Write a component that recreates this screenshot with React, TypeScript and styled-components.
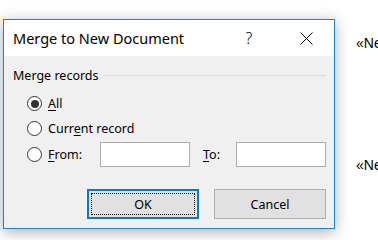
import React from "react";
import styled, { createGlobalStyle } from "styled-components";

const Global = createGlobalStyle`
  html, body { margin: 0; padding: 0; background: #ffffff; }
  body { width: 378px; height: 240px; overflow: hidden; font-family: "Noto Sans", "Open Sans", sans-serif; }
`;

const Page = styled.div`
  display: flex;
  align-items: flex-start;
  padding: 19px 0 0 3px;
  width: 378px;
  height: 240px;
  box-sizing: border-box;
  overflow: hidden;
`;

const Dialog = styled.div`
  flex-shrink: 0;
  width: 332px;
  height: 210px;
  box-sizing: border-box;
  border: 1px solid #1883d7;
  background: #f0f0f0;
  box-shadow: 0 3px 14px rgba(0, 0, 0, 0.32);
  display: flex;
  flex-direction: column;
  position: relative;
  z-index: 1;
`;

const TitleBar = styled.div`
  height: 36px;
  background: #ffffff;
  display: flex;
  align-items: center;
  padding: 0 13px 0 9px;
  flex-shrink: 0;
`;

const Title = styled.div`
  flex: 1;
  font-size: 14.5px;
  color: #000;
  font-family: "Noto Sans", "Open Sans", sans-serif;
`;

const TitleButton = styled.div<{ $w: number; $ml?: number }>`
  width: ${(p) => p.$w}px;
  margin-left: ${(p) => p.$ml ?? 0}px;
  height: 30px;
  display: flex;
  align-items: center;
  justify-content: center;
  font-size: 16px;
  color: #000;
  font-weight: 300;
`;

const Body = styled.div`
  padding: 11px 8px 0 9px;
  display: flex;
  flex-direction: column;
  font-size: 12px;
  color: #000;
`;

const GroupHeader = styled.div`
  display: flex;
  align-items: center;
  height: 16px;
  gap: 6px;
`;

const GroupLabel = styled.span`
  font-size: 12.5px;
  color: #000;
`;

const GroupLine = styled.div`
  flex: 1;
  height: 1px;
  background: #dcdcdc;
`;

const Rows = styled.div`
  display: flex;
  flex-direction: column;
  margin-top: 8px;
  padding-left: 14px;
`;

const Row = styled.div<{ $mt?: number }>`
  display: flex;
  align-items: center;
  height: 25px;
  margin-top: ${(p) => p.$mt ?? 0}px;
`;

const Radio = styled.span<{ $checked?: boolean }>`
  width: 15px;
  height: 15px;
  box-sizing: border-box;
  border: 1.3px solid #333;
  border-radius: 50%;
  background: #fff;
  display: flex;
  align-items: center;
  justify-content: center;
  flex-shrink: 0;
  &::after {
    content: "";
    display: ${(p) => (p.$checked ? "block" : "none")};
    width: 8px;
    height: 8px;
    border-radius: 50%;
    background: #333;
  }
`;

const Label = styled.span<{ $w?: number }>`
  margin-left: 6px;
  font-size: 12.5px;
  ${(p) => (p.$w ? `width: ${p.$w}px;` : "")}
  u { text-decoration-thickness: 1px; text-underline-offset: 2px; }
`;

const ToLabel = styled.span`
  margin-left: 13px;
  width: 33px;
  font-size: 12.5px;
  u { text-decoration-thickness: 1px; text-underline-offset: 2px; }
`;

const Input = styled.div`
  width: 90px;
  height: 25px;
  box-sizing: border-box;
  border: 1px solid #acacac;
  background: #fff;
`;

const ButtonRow = styled.div`
  display: flex;
  justify-content: flex-end;
  gap: 15px;
  margin-top: 22px;
`;

const Button = styled.div<{ $default?: boolean }>`
  width: 112px;
  height: 30px;
  box-sizing: border-box;
  background: #e1e1e1;
  border: ${(p) => (p.$default ? "2px solid #0078d7" : "1px solid #adadad")};
  display: flex;
  align-items: center;
  justify-content: center;
  font-size: 12.5px;
  color: #000;
  padding: ${(p) => (p.$default ? "2px" : "0")};
`;

const FocusRect = styled.div`
  flex: 1;
  align-self: stretch;
  border: 1px dotted #000;
  display: flex;
  align-items: center;
  justify-content: center;
`;

const Doc = styled.div`
  margin-left: 21px;
  display: flex;
  flex-direction: column;
  font-family: "Liberation Sans", Arial, sans-serif;
  font-size: 14px;
  color: #000;
  white-space: nowrap;
  padding-top: 15px;
`;

const DocLine = styled.div<{ $mt?: number }>`
  height: 18px;
  line-height: 18px;
  margin-top: ${(p) => p.$mt ?? 0}px;
`;

export default function App() {
  return (
    <>
      <Global />
      <Page>
        <Dialog>
          <TitleBar>
            <Title>Merge to New Document</Title>
            <TitleButton $w={30}>?</TitleButton>
            <TitleButton $w={30} $ml={27}>
              <svg width="13" height="13" viewBox="0 0 13 13">
                <path d="M0.5 0.5 L12.5 12.5 M12.5 0.5 L0.5 12.5" stroke="#000" strokeWidth="1" fill="none" />
              </svg>
            </TitleButton>
          </TitleBar>
          <Body>
            <GroupHeader>
              <GroupLabel>Merge records</GroupLabel>
              <GroupLine />
            </GroupHeader>
            <Rows>
              <Row>
                <Radio $checked />
                <Label><u>A</u>ll</Label>
              </Row>
              <Row>
                <Radio />
                <Label>Curr<u>e</u>nt record</Label>
              </Row>
              <Row $mt={1}>
                <Radio />
                <Label $w={52}><u>F</u>rom:</Label>
                <Input />
                <ToLabel><u>T</u>o:</ToLabel>
                <Input />
              </Row>
            </Rows>
            <ButtonRow>
              <Button $default>
                <FocusRect>OK</FocusRect>
              </Button>
              <Button>Cancel</Button>
            </ButtonRow>
          </Body>
        </Dialog>
        <Doc>
          <DocLine>«Next Record»</DocLine>
          <DocLine $mt={104}>«Next Record»</DocLine>
        </Doc>
      </Page>
    </>
  );
}
